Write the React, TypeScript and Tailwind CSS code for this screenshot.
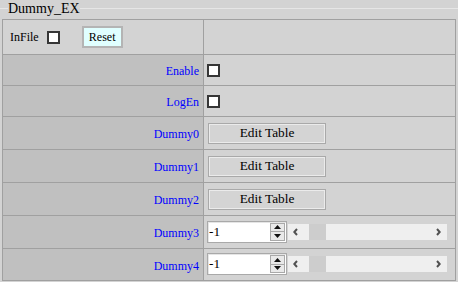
import { useState } from "react";

function Check() {
  const [on, setOn] = useState(false);
  return (
    <button
      onClick={() => setOn(!on)}
      className="flex h-[13px] w-[13px] items-center justify-center border-2 border-[#363636] bg-white text-[10px] leading-none"
    >
      {on ? "✓" : ""}
    </button>
  );
}

function Label({ text }: { text: string }) {
  return (
    <div className="flex items-center justify-end bg-[#c0c0c0] pr-[4px] pt-[2px] text-[12px] text-[#0000ff]">{text}</div>
  );
}

function EditBtn() {
  return (
    <div className="flex items-center bg-[#d3d3d3] pl-[4px]">
      <button className="h-[21px] w-[118px] border border-[#a9a9a9] bg-[#d4d4d4] text-[13.33px] leading-none text-black shadow-[inset_1px_1px_0_#ebebeb,inset_-1px_-1px_0_#ebebeb]">
        Edit Table
      </button>
    </div>
  );
}

function Spin() {
  const [val, setVal] = useState("-1");
  return (
    <div className="flex items-center bg-[#d3d3d3] pl-[3px] pb-[1px]">
      <div className="flex h-[22px] w-[80px] items-center border border-[#a9a9a9] bg-white pr-[1px] shadow-[inset_1px_1px_0_#e5e5e5]">
        <input
          value={val}
          onChange={(e) => setVal(e.target.value)}
          className="h-full w-0 flex-1 bg-transparent pl-[1px] text-[13.33px] text-black outline-none"
        />
        <div className="flex h-[18px] w-[15px] flex-col border border-[#a9a9a9] bg-[#e9e9e9]">
          <div className="flex flex-1 items-center justify-center border-b border-[#a9a9a9]">
            <svg width="7" height="4" viewBox="0 0 7 4"><path d="M3.5 0 7 4H0z" fill="#111" /></svg>
          </div>
          <div className="flex flex-1 items-center justify-center">
            <svg width="7" height="4" viewBox="0 0 7 4"><path d="M0 0h7L3.5 4z" fill="#111" /></svg>
          </div>
        </div>
      </div>
      <div className="ml-[1px] flex h-[16px] w-[159px] items-center bg-[#efefef]">
        <svg className="ml-[5px] shrink-0" width="5" height="8" viewBox="0 0 5 8"><path d="M4 1 1.3 4 4 7" fill="none" stroke="#505050" strokeWidth="2" /></svg>
        <div className="ml-[11px] h-full w-[17px] shrink-0 bg-[#cdcdcd]" />
        <div className="flex-1" />
        <svg className="mr-[6px] shrink-0" width="5" height="8" viewBox="0 0 5 8"><path d="M1 1 3.7 4 1 7" fill="none" stroke="#505050" strokeWidth="2" /></svg>
      </div>
    </div>
  );
}

export default function App() {
  return (
    <div className="h-[282px] w-[458px] overflow-hidden bg-[#d3d3d3] font-[family-name:Liberation_Serif,serif] text-black">
      <div className="flex h-[19px] items-start">
        <div className="mt-[8px] h-px w-[8px] bg-[#e6e6e6]" />
        <div className="text-[14px] leading-[17px]">Dummy_EX</div>
        <div className="mt-[8px] h-px flex-1 bg-[#e6e6e6]" />
      </div>
      <div className="ml-[2px] grid w-[454px] grid-cols-[200px_1fr] grid-rows-[34px_30px_30px_32px_32px_32px_32px_31px] gap-px border border-[#a0a0a0] bg-[#a0a0a0]">
        <div className="flex items-center bg-[#d3d3d3] pl-[7px] text-[12px]">
          <span>InFile</span>
          <span className="ml-[8px]"><Check /></span>
          <button className="ml-[22px] h-[22px] w-[41px] border-2 border-[#b4b4b4] bg-[#e0ffff] text-[12px] leading-none">Reset</button>
        </div>
        <div className="bg-[#d3d3d3]" />

        <Label text="Enable" />
        <div className="flex items-center bg-[#d3d3d3] pl-[3px] pt-[1px]"><Check /></div>

        <Label text="LogEn" />
        <div className="flex items-center bg-[#d3d3d3] pl-[3px] pt-[1px]"><Check /></div>

        <Label text="Dummy0" />
        <EditBtn />
        <Label text="Dummy1" />
        <EditBtn />
        <Label text="Dummy2" />
        <EditBtn />

        <Label text="Dummy3" />
        <Spin />
        <Label text="Dummy4" />
        <Spin />
      </div>
    </div>
  );
}
